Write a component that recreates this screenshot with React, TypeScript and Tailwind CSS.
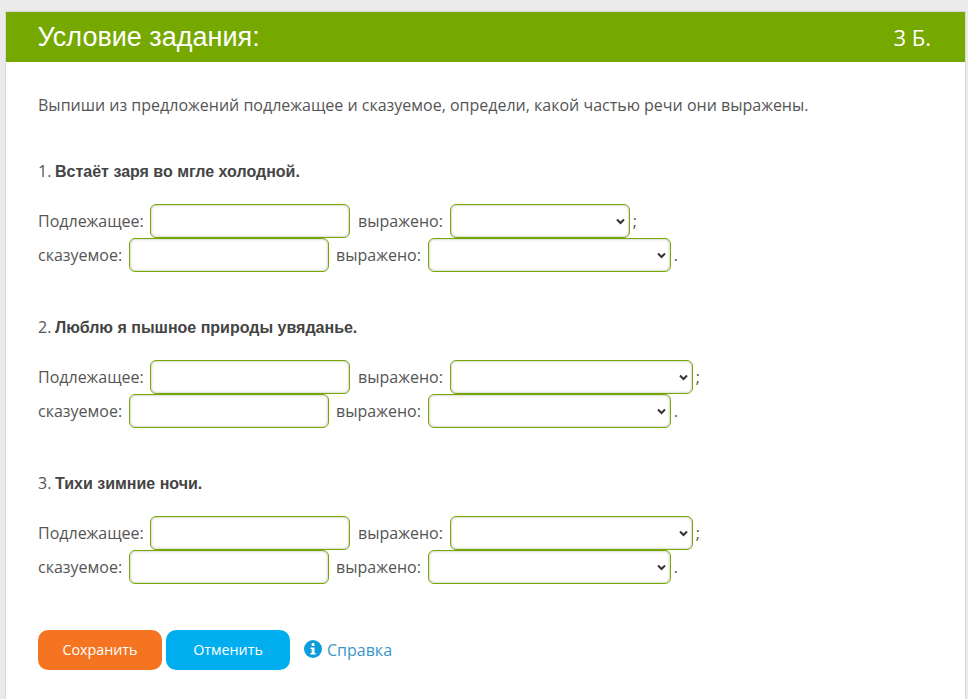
import React from "react";

const inputCls =
  "h-[34px] w-[200px] rounded-[6px] border border-[#76a900] bg-white shadow-[inset_0_0_3px_rgba(0,0,0,0.3)]";

function Sel({ width }: { width: string }) {
  return (
    <div className={`${width} relative h-[34px] rounded-[6px] border border-[#76a900] bg-white shadow-[inset_0_0_3px_rgba(0,0,0,0.3)]`}>
      <svg className="absolute right-[4px] top-[13px]" width="9" height="7" viewBox="0 0 9 7" fill="none">
        <path d="M1 1.5 L4.5 5 L8 1.5" stroke="#333" strokeWidth="2" />
      </svg>
    </div>
  );
}

function Task({ n, text, firstSel }: { n: number; text: string; firstSel: string }) {
  return (
    <div className="mb-[44px]">
      <p className="mb-[22px] h-[22px] leading-[22px]">
        {n}. <b className="-ml-[0.5px] font-bold font-['Liberation_Sans',sans-serif] text-[#444]">{text}</b>
      </p>
      <div className="flex h-[34px] items-center">
        <span className="w-[106px]">Подлежащее:</span>
        <div className={`${inputCls} ml-[6px]`} />
        <span className="ml-[8px]">выражено:</span>
        <div className="ml-[7px]"><Sel width={firstSel} /></div>
        <span className="ml-[3px]">;</span>
      </div>
      <div className="flex h-[34px] items-center">
        <span className="w-[84px]">сказуемое:</span>
        <div className={`${inputCls} ml-[7px]`} />
        <span className="ml-[7px]">выражено:</span>
        <div className="ml-[7px]"><Sel width="w-[243px]" /></div>
        <span className="ml-[3px]">.</span>
      </div>
    </div>
  );
}

export default function App() {
  return (
    <div className="h-[699px] w-[968px] overflow-hidden bg-[#ebebeb] pl-[5px] pr-[2px] pt-[11px] font-['Open_Sans',sans-serif] text-[16px] text-[#555]">
      <div className="h-[688px] border border-b-0 border-[#d8d8d8] bg-white">
        <div className="flex h-[50px] items-center justify-between bg-[#76a900] pl-[31.5px] pr-[34px] text-[#fff]">
          <span className="font-['Liberation_Sans',sans-serif] text-[27px]">Условие задания:</span>
          <span className="text-[22px]">3 Б.</span>
        </div>
        <div className="pl-[32px] pt-[32px]">
          <p className="mb-[44px] h-[22px] leading-[22px]">
            Выпиши из предложений подлежащее и сказуемое, определи, какой частью речи они выражены.
          </p>
          <Task n={1} text="Встаёт заря во мгле холодной." firstSel="w-[180px]" />
          <Task n={2} text="Люблю я пышное природы увяданье." firstSel="w-[243px]" />
          <Task n={3} text="Тихи зимние ночи." firstSel="w-[243px]" />
          <div className="mt-[46px] flex h-[40px] items-center">
            <button className="h-[40px] w-[124px] rounded-[10px] bg-[#f57421] text-[14.3px] text-white">Сохранить</button>
            <button className="ml-[4px] h-[40px] w-[124px] rounded-[10px] bg-[#00aeef] text-[14.3px] text-white">Отменить</button>
            <svg className="ml-[14px] mb-[2px]" width="18" height="18" viewBox="0 0 18 18">
              <circle cx="9" cy="9" r="9" fill="#0d9ddb" />
              <rect x="7.6" y="3" width="3" height="3" rx="1.2" fill="#fff" />
              <path d="M6.5 7.5h4v5.5h1.2v1.6H6.5V13h1.2V9.1H6.5z" fill="#fff" />
            </svg>
            <span className="ml-[5px] text-[#3c96c8]">Справка</span>
          </div>
        </div>
      </div>
    </div>
  );
}
